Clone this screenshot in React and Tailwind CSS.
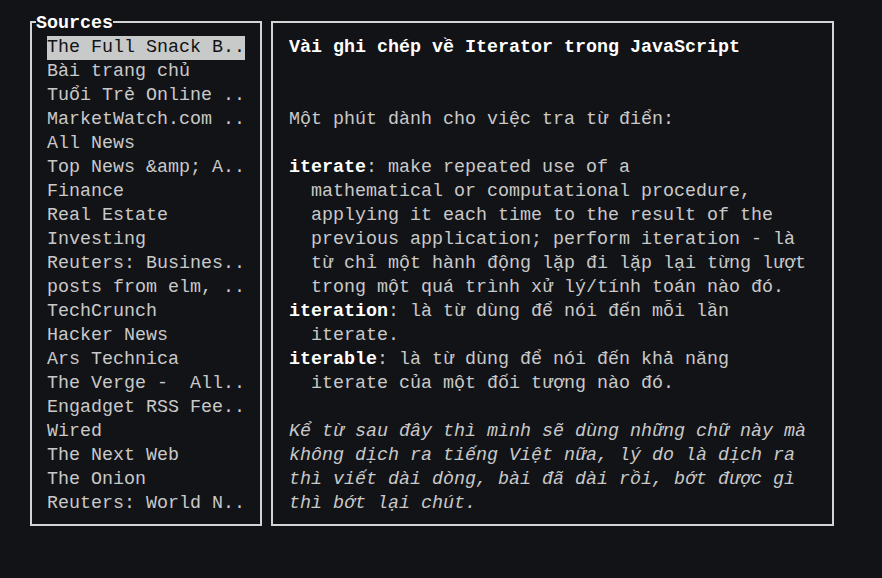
const SOURCES = [
  'The Full Snack B..',
  'Bài trang chủ',
  'Tuổi Trẻ Online ..',
  'MarketWatch.com ..',
  'All News',
  'Top News &amp; A..',
  'Finance',
  'Real Estate',
  'Investing',
  'Reuters: Busines..',
  'posts from elm, ..',
  'TechCrunch',
  'Hacker News',
  'Ars Technica',
  'The Verge -  All..',
  'Engadget RSS Fee..',
  'Wired',
  'The Next Web',
  'The Onion',
  'Reuters: World N..',
];

// each article line is a list of [text, kind] segments
const ARTICLE = [
  [['Vài ghi chép về Iterator trong JavaScript', 'b']],
  [],
  [],
  [['Một phút dành cho việc tra từ điển:']],
  [],
  [['iterate', 'b'], [': make repeated use of a']],
  [['  mathematical or computational procedure,']],
  [['  applying it each time to the result of the']],
  [['  previous application; perform iteration - là']],
  [['  từ chỉ một hành động lặp đi lặp lại từng lượt']],
  [['  trong một quá trình xử lý/tính toán nào đó.']],
  [['iteration', 'b'], [': là từ dùng để nói đến mỗi lần']],
  [['  iterate.']],
  [['iterable', 'b'], [': là từ dùng để nói đến khả năng']],
  [['  iterate của một đối tượng nào đó.']],
  [],
  [['Kể từ sau đây thì mình sẽ dùng những chữ này mà', 'i']],
  [['không dịch ra tiếng Việt nữa, lý do là dịch ra', 'i']],
  [['thì viết dài dòng, bài đã dài rồi, bớt được gì', 'i']],
  [['thì bớt lại chút.', 'i']],
];

function Seg({ text, kind }) {
  if (kind === 'b') return <span className="font-bold text-white">{text}</span>;
  if (kind === 'i') return <span className="italic">{text}</span>;
  return <span>{text}</span>;
}

export default function App() {
  return (
    <div className="w-[882px] h-[578px] bg-[#121316] text-[#c9c9c9] font-['Liberation_Mono',monospace] text-[18.33px] overflow-hidden">
      <div className="flex gap-[9px] pl-[30px] pt-[21px]">
        <div className="relative w-[232px] h-[505px] border-2 border-[#d4d4d4] pl-[15px] pt-[13px]">
          <div className="absolute -top-[10px] left-[4px] h-[22px] leading-[22px] bg-[#121316] font-bold text-white">Sources</div>
          {SOURCES.map((s, i) => (
            <div key={i} className="h-[24px] leading-[24px] whitespace-pre">
              <span className={i === 0 ? 'bg-[#c8c9c9] text-[#121316] inline-block h-[24px]' : ''}>{s}</span>
            </div>
          ))}
        </div>
        <div className="w-[563px] h-[505px] border-2 border-[#d4d4d4] pl-[16px] pt-[13px]">
          {ARTICLE.map((line, i) => (
            <div key={i} className="h-[24px] leading-[24px] whitespace-pre">
              {line.map((seg, j) => <Seg key={j} text={seg[0]} kind={seg[1]} />)}
            </div>
          ))}
        </div>
      </div>
    </div>
  );
}
